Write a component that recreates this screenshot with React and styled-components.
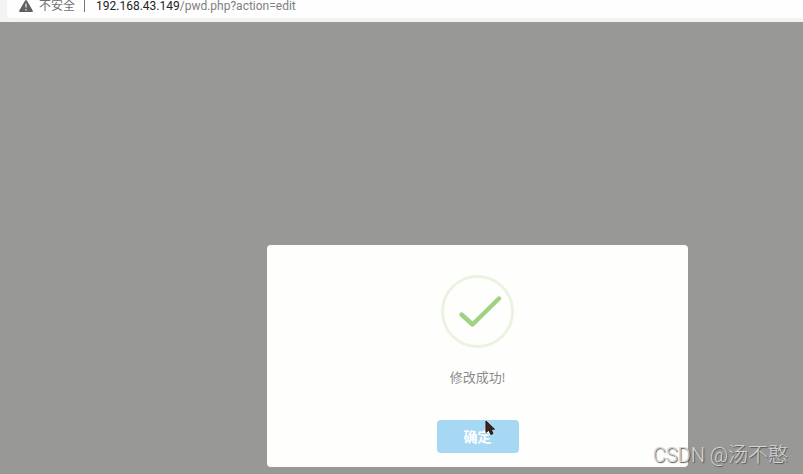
import React, { useState } from 'react';
import styled, { createGlobalStyle } from 'styled-components';

const App = () => {
  const [open, setOpen] = useState(true);

  return (
    <>
      <GlobalStyle />
      <Page>
        <BrowserBar>
          <AddressBox>
            <WarningIcon viewBox="0 0 14 12" aria-hidden="true">
              <path d="M6 .8Q7-.6 8 .8L13.700 10.400Q14.200 12 12.800 12H1.200Q-.2 12 .3 10.400Z" fill="#606060" />
              <path d="M7 3.600V7.600M7 9V10.400" stroke="#eee" strokeWidth="1.200" />
            </WarningIcon>
            <Insecure>不安全</Insecure>
            <Divider />
            <Url><b>192.168.43.149</b>/pwd.php?action=edit</Url>
          </AddressBox>
        </BrowserBar>
        <Overlay>
          {open && (
            <Modal role="dialog" aria-labelledby="message">
              <SuccessIcon viewBox="0 0 73 73" aria-hidden="true">
                <circle cx="36.500" cy="36.500" r="35" stroke="#e8f3e0" strokeWidth="2.800" />
                <path d="M20.500 39.500L31.500 49.500L58 23.500" stroke="#a0d284" strokeWidth="4.400" strokeLinecap="round" strokeLinejoin="round" />
              </SuccessIcon>
              <Message id="message">修改成功!</Message>
              <Confirm type="button" onClick={() => setOpen(false)}>
                确定
                <Pointer viewBox="0 0 10 16" aria-hidden="true">
                  <path d="M1 1V12.500L3.800 10L5.800 14.500L8 13.500L6 9.200H9.500Z" fill="#4a2019" stroke="#1c1210" strokeWidth="1" />
                </Pointer>
              </Confirm>
            </Modal>
          )}
        </Overlay>
        <Watermark>CSDN @汤不憨</Watermark>
      </Page>
    </>
  )
}

export default App;

const GlobalStyle = createGlobalStyle`
  * {
    box-sizing: border-box;
  }

  body {
    margin: 0;
    font-family: "Open Sans", "Noto Sans CJK SC", sans-serif;
  }
`;

const Page = styled.div`
  position: relative;
  display: flex;
  flex-direction: column;
  min-height: 100vh;
  overflow: hidden;
  background: #989896;
`;

const BrowserBar = styled.header`
  padding: 0 0 4px 7px;
  background: #f3f3f2;
`;

const AddressBox = styled.div`
  display: flex;
  align-items: center;
  padding: 0 12px 6px;
  border-bottom-left-radius: 3px;
  background: #fefefe;
  font-size: 12px;
  line-height: 12px;
  white-space: nowrap;
`;

const WarningIcon = styled.svg`
  width: 14px;
  height: 12px;
`;

const Insecure = styled.span`
  margin-left: 6px;
  color: #707070;
`;

const Divider = styled.span`
  width: 1px;
  height: 12px;
  margin: 0 11px 0 9px;
  background: #777;
`;

const Url = styled.span`
  color: #808080;
  font-family: Roboto, sans-serif;

  b {
    color: #222;
    font-weight: 400;
  }
`;

const Overlay = styled.main`
  flex: 1;
  display: flex;
  align-items: flex-end;
  justify-content: center;
  padding: 24px 0 7px 152px;
`;

const Modal = styled.section`
  display: flex;
  flex-direction: column;
  align-items: center;
  width: 65%;
  max-width: 421px;
  padding: 30px 16px 14px;
  border-radius: 4px;
  background: #fefefd;
`;

const SuccessIcon = styled.svg`
  width: 73px;
  height: 73px;
  fill: none;
`;

const Message = styled.p`
  margin: 19px 0 33px;
  color: #8b8b8b;
  font-size: 13px;
  line-height: 20px;
`;

const Confirm = styled.button`
  position: relative;
  padding: 7px 27px;
  border: 0;
  border-radius: 4px;
  background: #a6d8f4;
  color: #fff;
  font-family: inherit;
  font-size: 14px;
  font-weight: 700;
  line-height: 19px;
  cursor: pointer;
`;

const Pointer = styled.svg`
  position: absolute;
  top: 0;
  left: 48px;
  width: 10px;
  height: 16px;
`;

const Watermark = styled.div`
  position: absolute;
  right: 15px;
  bottom: 4px;
  color: #d6d6d6;
  font-family: Roboto, "Noto Sans CJK SC", sans-serif;
  font-size: 20px;
  font-weight: 300;
  line-height: 30px;
  text-shadow: 1px 1px 1px #555;
`;
